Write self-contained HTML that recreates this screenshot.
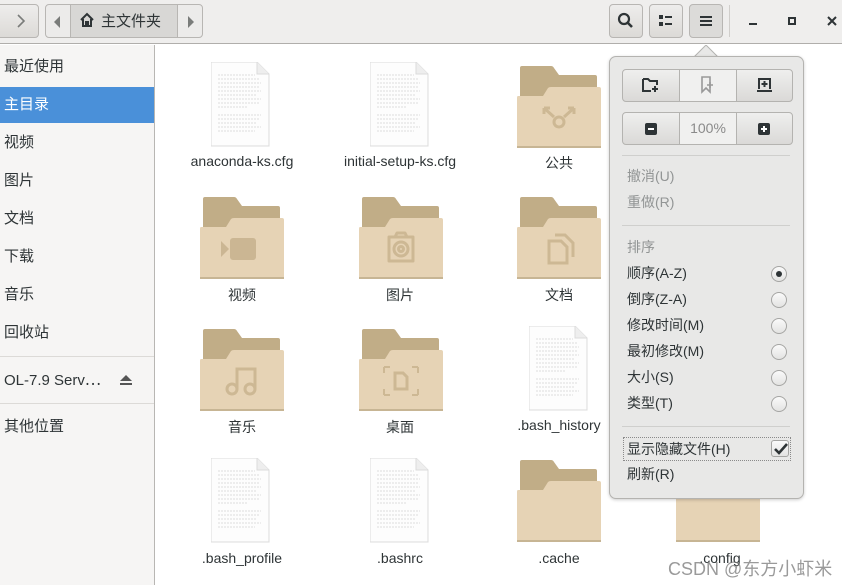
<!DOCTYPE html>
<html><head><meta charset="utf-8"><style>
*{margin:0;padding:0;box-sizing:border-box}
body{width:842px;height:585px;overflow:hidden;background:#fff;font-family:"Liberation Sans","Noto Sans CJK SC",sans-serif;position:relative;color:#2e3436}
.abs{position:absolute}
#hdr{left:0;top:0;width:842px;height:44px;background:#efeeed;border-bottom:1px solid #b0aeab}
.btn{position:absolute;top:4px;height:34px;border:1px solid #b8b6b3;border-radius:4px;background:linear-gradient(#eeedec,#dcdad7)}
#side{left:0;top:45px;width:155px;height:540px;background:#f6f5f4;border-right:1px solid #b8b6b3}
.si{position:absolute;left:4px;font-size:15px;color:#2e3436;white-space:nowrap}
.lbl{position:absolute;font-size:14px;text-align:center;width:160px;color:#2e3436;white-space:nowrap}
#pop{left:609px;top:56px;width:195px;height:443px;background:#e8e8e7;border:1px solid #b4b3b0;border-radius:7px;box-shadow:0 1px 3px rgba(0,0,0,.2)}
.mi{position:absolute;left:17px;font-size:14px;color:#2e3436;white-space:nowrap}
.dis{color:#929595}
.radio{position:absolute;left:161px;width:16px;height:16px;border-radius:50%;border:1px solid #a5a5a3;background:linear-gradient(#fafafa,#e3e3e2)}
.sep{position:absolute;left:12px;width:168px;height:1px;background:#cfcfcd}
.pb{position:absolute;height:33px;border:1px solid #b4b3b0;background:linear-gradient(#efefee,#dad9d7)}
</style></head><body>
<div id="hdr" class="abs">
 <div class="btn" style="left:-4px;width:43px"></div>
 <svg class="abs" style="left:15px;top:14px" width="12" height="14"><path d="M3,1 L9,7 L3,13" fill="none" stroke="#7a7c7a" stroke-width="1.6"/></svg>
 <div class="btn" style="left:45px;width:158px;background:#ecebea"></div>
 <div class="abs" style="left:70px;top:5px;width:108px;height:32px;background:#d8d7d5;border-left:1px solid #b8b6b3;border-right:1px solid #b8b6b3"></div>
 <svg class="abs" style="left:54px;top:16px" width="8" height="12"><path d="M6,0 L0,6 L6,12Z" fill="#7a7c7a"/></svg>
 <svg class="abs" style="left:188px;top:16px" width="8" height="12"><path d="M0,0 L6,6 L0,12Z" fill="#7a7c7a"/></svg>
 <svg class="abs" style="left:79px;top:12px" width="16" height="16"><path d="M2,8 L8,2 L14,8 M4,7 V14 H12 V7 M7,14 V10 H9 V14" fill="none" stroke="#2e3436" stroke-width="2"/></svg>
 <div class="abs" style="left:101px;top:10px;font-size:15px;color:#2e3436">主文件夹</div>
 <div class="btn" style="left:609px;width:34px"></div>
 <svg class="abs" style="left:617px;top:12px" width="18" height="18"><circle cx="7" cy="7" r="5" fill="none" stroke="#2e3436" stroke-width="2.2"/><path d="M10.5,10.5 L15,15" stroke="#2e3436" stroke-width="2.6"/></svg>
 <div class="btn" style="left:649px;width:34px"></div>
 <svg class="abs" style="left:659px;top:15px" width="14" height="12"><rect x="0" y="0" width="4" height="4" fill="#2e3436"/><rect x="0" y="7" width="4" height="4" fill="#2e3436"/><rect x="6" y="1" width="7" height="2" fill="#2e3436"/><rect x="6" y="8" width="7" height="2" fill="#2e3436"/></svg>
 <div class="btn" style="left:689px;width:34px;background:#dcdbd9"></div>
 <svg class="abs" style="left:700px;top:15px" width="12" height="12"><rect y="1" width="12" height="2" fill="#2e3436"/><rect y="5" width="12" height="2" fill="#2e3436"/><rect y="9" width="12" height="2" fill="#2e3436"/></svg>
 <div class="abs" style="left:729px;top:5px;width:1px;height:32px;background:#d0cecb"></div>
 <div class="abs" style="left:749px;top:23px;width:8px;height:2px;background:#2e3436"></div>
 <div class="abs" style="left:788px;top:17px;width:8px;height:8px;border:2px solid #2e3436"></div>
 <svg class="abs" style="left:827px;top:16px" width="10" height="10"><path d="M1,1 L9,9 M9,1 L1,9" stroke="#2e3436" stroke-width="2"/></svg>
</div>
<div id="side" class="abs">
 <div class="si" style="top:10px">最近使用</div>
 <div class="abs" style="left:0;top:42px;width:154px;height:36px;background:#4a90d9"></div>
 <div class="si" style="top:48px;color:#fff">主目录</div>
 <div class="si" style="top:86px">视频</div>
 <div class="si" style="top:124px">图片</div>
 <div class="si" style="top:162px">文档</div>
 <div class="si" style="top:200px">下载</div>
 <div class="si" style="top:238px">音乐</div>
 <div class="si" style="top:276px">回收站</div>
 <div class="abs" style="left:0;top:311px;width:154px;height:1px;background:#dcdad7"></div>
 <div class="si" style="top:324px">OL-7.9 Serv⋯</div>
 <svg class="abs" style="left:119px;top:329px" width="14" height="12"><path d="M7,1 L13,7 H1Z" fill="#555"/><rect x="1" y="9" width="12" height="2" fill="#555"/></svg>
 <div class="abs" style="left:0;top:358px;width:154px;height:1px;background:#dcdad7"></div>
 <div class="si" style="top:370px">其他位置</div>
</div>

<svg width="0" height="0" style="position:absolute"><defs>
<g id="fold"><path d="M5,0 H34 Q36,0 37,2 L42,9 H78 Q80,9 80,11 V42 H3 V2 Q3,0 5,0Z" fill="#c1ad87"/><path d="M1,30 H26 L31,22 Q32,21 34,21 H82 Q84,21 84,23 V80 Q84,82 82,82 H2 Q0,82 0,80 V32 Q0,30 1,30Z" fill="#e6d3b5"/><rect x="0" y="80" width="84" height="2" fill="#c7b594"/></g>
<g id="doc"><path d="M0,0 H46 L58,12 V84 H0Z" fill="#fdfdfd" stroke="#dcdcdc"/><path d="M46,0 V12 H58" fill="#eee" stroke="#dcdcdc"/>
<g stroke="#bdbdbd" stroke-width=".6" stroke-dasharray="2 1"><path d="M7,13H44M7,17H48M7,21H50M7,25H48M7,29H50M7,33H46M7,37H50M7,41H48M7,45H36M7,53H50M7,57H48M7,61H46M7,65H50M7,69H44"/></g></g>
</defs></svg>

<svg class="abs" style="left:211px;top:62px" width="60" height="86"><use href="#doc"/></svg>
<svg class="abs" style="left:370px;top:62px" width="60" height="86"><use href="#doc"/></svg>
<svg class="abs" style="left:529px;top:326px" width="60" height="86"><use href="#doc"/></svg>
<svg class="abs" style="left:211px;top:458px" width="60" height="86"><use href="#doc"/></svg>
<svg class="abs" style="left:370px;top:458px" width="60" height="86"><use href="#doc"/></svg>

<svg class="abs" style="left:517px;top:66px" width="86" height="84"><use href="#fold"/><g fill="none" stroke="#cdb894" stroke-width="3"><circle cx="42" cy="56" r="5"/><path d="M27,42 L37,51 M27,42 H33 M27,42 V48 M57,42 L47,51 M57,42 H51 M57,42 V48"/></g></svg>
<svg class="abs" style="left:200px;top:197px" width="86" height="84"><use href="#fold"/><rect x="30" y="41" width="26" height="22" rx="3" fill="#cbb693"/><path d="M21,44 L29,52 L21,60Z" fill="#cbb693"/></svg>
<svg class="abs" style="left:359px;top:197px" width="86" height="84"><use href="#fold"/><g fill="none" stroke="#cdb894" stroke-width="3"><path d="M30,40 H54 V64 H30Z M36,40 L38,36 H46 L48,40" stroke-linejoin="round"/><circle cx="42" cy="52" r="7"/><circle cx="42" cy="52" r="2.5"/></g></svg>
<svg class="abs" style="left:517px;top:197px" width="86" height="84"><use href="#fold"/><g fill="none" stroke="#cdb894" stroke-width="3"><path d="M32,44 H44 L50,50 V66 H32Z M38,38 H48 L56,46 V60"/></g></svg>
<svg class="abs" style="left:200px;top:329px" width="86" height="84"><use href="#fold"/><g fill="none" stroke="#cdb894" stroke-width="3"><circle cx="32" cy="60" r="5"/><circle cx="50" cy="60" r="5"/><path d="M37,60 V40 H55 V60"/></g></svg>
<svg class="abs" style="left:359px;top:329px" width="86" height="84"><use href="#fold"/><g fill="none" stroke="#cdb894" stroke-width="3"><path d="M36,44 H44 L48,48 V60 H36Z"/><path d="M25,38 V44 M25,38 H31 M59,38 V44 M59,38 H53 M25,66 V60 M25,66 H31 M59,66 V60 M59,66 H53" stroke-width="2"/></g></svg>
<svg class="abs" style="left:517px;top:460px" width="86" height="84"><use href="#fold"/></svg>
<svg class="abs" style="left:676px;top:460px" width="86" height="84"><use href="#fold"/></svg>

<div class="lbl" style="left:162px;top:153px">anaconda-ks.cfg</div>
<div class="lbl" style="left:320px;top:153px">initial-setup-ks.cfg</div>
<div class="lbl" style="left:479px;top:153px">公共</div>
<div class="lbl" style="left:162px;top:285px">视频</div>
<div class="lbl" style="left:320px;top:285px">图片</div>
<div class="lbl" style="left:479px;top:285px">文档</div>
<div class="lbl" style="left:162px;top:417px">音乐</div>
<div class="lbl" style="left:320px;top:417px">桌面</div>
<div class="lbl" style="left:479px;top:417px">.bash_history</div>
<div class="lbl" style="left:162px;top:550px">.bash_profile</div>
<div class="lbl" style="left:320px;top:550px">.bashrc</div>
<div class="lbl" style="left:479px;top:550px">.cache</div>
<div class="lbl" style="left:640px;top:550px">.config</div>

<svg class="abs" style="left:694px;top:45px" width="26" height="13"><path d="M0,12 L12,0 L24,12" fill="#e8e8e7" stroke="#b4b3b0"/></svg>
<div id="pop" class="abs">
 <div class="pb" style="left:12px;top:12px;width:58px;border-radius:4px 0 0 4px"></div>
 <div class="pb" style="left:69px;top:12px;width:58px;background:#f0f0ef"></div>
 <div class="pb" style="left:126px;top:12px;width:57px;border-radius:0 4px 4px 0"></div>
 <svg class="abs" style="left:32px;top:20px" width="18" height="16"><path d="M1,2 H6 L8,4 H15 V8 M9,14 H1 V2" fill="none" stroke="#2e3436" stroke-width="2"/><path d="M13,9 V15 M10,12 H16" stroke="#2e3436" stroke-width="2"/></svg>
 <svg class="abs" style="left:91px;top:19px" width="14" height="18"><path d="M1,1 H9 V16 L5,12 L1,16Z" fill="none" stroke="#999" stroke-width="1.6"/><path d="M9,6 V12 M6,9 H12" stroke="#999" stroke-width="1.6"/></svg>
 <svg class="abs" style="left:146px;top:20px" width="18" height="16"><path d="M3,12 V2 H14 V12 M1,14 H16" fill="none" stroke="#2e3436" stroke-width="2"/><path d="M8.5,4 V10 M5.5,7 H11.5" stroke="#2e3436" stroke-width="2"/></svg>
 <div class="pb" style="left:12px;top:55px;width:58px;border-radius:4px 0 0 4px"></div>
 <div class="pb" style="left:69px;top:55px;width:58px;background:#f0f0ef;font-size:14px;color:#8a8a8a;text-align:center;line-height:31px">100%</div>
 <div class="pb" style="left:126px;top:55px;width:57px;border-radius:0 4px 4px 0"></div>
 <div class="abs" style="left:35px;top:66px;width:12px;height:12px;background:#2e3436;border-radius:2px"><div style="position:absolute;left:3px;top:5px;width:6px;height:2px;background:#fff"></div></div>
 <div class="abs" style="left:148px;top:66px;width:12px;height:12px;background:#2e3436;border-radius:2px"><div style="position:absolute;left:3px;top:5px;width:6px;height:2px;background:#fff"></div><div style="position:absolute;left:5px;top:3px;width:2px;height:6px;background:#fff"></div></div>
 <div class="sep" style="top:98px"></div>
 <div class="mi dis" style="top:109px">撤消(U)</div>
 <div class="mi dis" style="top:135px">重做(R)</div>
 <div class="sep" style="top:168px"></div>
 <div class="mi dis" style="top:180px">排序</div>
 <div class="mi" style="top:206px">顺序(A-Z)</div><div class="radio" style="top:209px"><div style="position:absolute;left:4px;top:4px;width:6px;height:6px;border-radius:50%;background:#2e3436"></div></div>
 <div class="mi" style="top:232px">倒序(Z-A)</div><div class="radio" style="top:235px"></div>
 <div class="mi" style="top:258px">修改时间(M)</div><div class="radio" style="top:261px"></div>
 <div class="mi" style="top:284px">最初修改(M)</div><div class="radio" style="top:287px"></div>
 <div class="mi" style="top:310px">大小(S)</div><div class="radio" style="top:313px"></div>
 <div class="mi" style="top:336px">类型(T)</div><div class="radio" style="top:339px"></div>
 <div class="sep" style="top:369px"></div>
 <div class="abs" style="left:13px;top:380px;width:168px;height:24px;border:1px dotted #8a8a8a"></div>
 <div class="mi" style="top:382px">显示隐藏文件(H)</div>
 <div class="abs" style="left:161px;top:383px;width:18px;height:17px;border:1px solid #a5a5a3;border-radius:3px;background:linear-gradient(#fafafa,#e3e3e2)"><svg width="16" height="15" style="position:absolute;left:1px;top:1px"><path d="M2,7 L6,11 L14,2" fill="none" stroke="#2e3436" stroke-width="2.6"/></svg></div>
 <div class="mi" style="top:407px">刷新(R)</div>
</div>
<div class="abs" style="left:668px;top:555px;font-size:18px;white-space:nowrap;color:rgba(120,120,120,.75)">CSDN @东方小虾米</div>
</body></html>
